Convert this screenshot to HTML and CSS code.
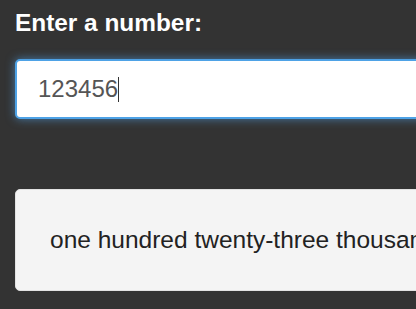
FILE: index.html
```html
<!DOCTYPE html>
<html>
    <head>
        <link rel="stylesheet" href="styles.css">
    </head>

    <body>
        <div class="container">
            <label for="number" class="label">Enter a number:</label>
            <div class="input-wrap">
                <input id="number" class="number-input" type="text" value="123456"/>
                <span class="caret"></span>
            </div>

            <div id="result" class="result">one hundred twenty-three thousand four hundred fifty-six</div>
        </div>

        <script>
            const input = document.getElementById("number");
            input.focus({ preventScroll: true });
            window.scrollTo(0, 0);
        </script>
    </body>
</html>
```

FILE: styles.css
```css
html, body {
    margin: 0;
    padding: 0;
    background-color: #333333;
    overflow: hidden;
}

body {
    font-family: "Liberation Sans", Arial, sans-serif;
}

.container {
    width: 720px;
    padding: 9px 15px 0 15px;
}

.label {
    display: block;
    color: #ffffff;
    font-size: 24.4px;
    font-weight: bold;
    line-height: 28px;
}

.input-wrap {
    position: relative;
    margin-top: 22px;
}

.number-input {
    display: block;
    box-sizing: border-box;
    width: 100%;
    height: 60px;
    padding: 0 21px;
    border: 2px solid #4ea2e6;
    border-radius: 5px;
    background-color: #ffffff;
    color: #555555;
    font-family: "Liberation Sans", Arial, sans-serif;
    font-size: 24px;
    box-shadow: 0 0 10px rgba(82, 162, 230, 0.65);
    outline: none;
    caret-color: transparent;
}

.caret {
    position: absolute;
    left: 103px;
    top: 18px;
    width: 1px;
    height: 25px;
    background-color: #333333;
}

.result {
    box-sizing: border-box;
    height: 102px;
    margin-top: 70px;
    padding: 36px 34px;
    background-color: #f4f4f4;
    border: 1px solid #e2e2e2;
    border-radius: 5px;
    color: #222222;
    font-size: 24.5px;
    line-height: 28px;
    white-space: nowrap;
}
```
